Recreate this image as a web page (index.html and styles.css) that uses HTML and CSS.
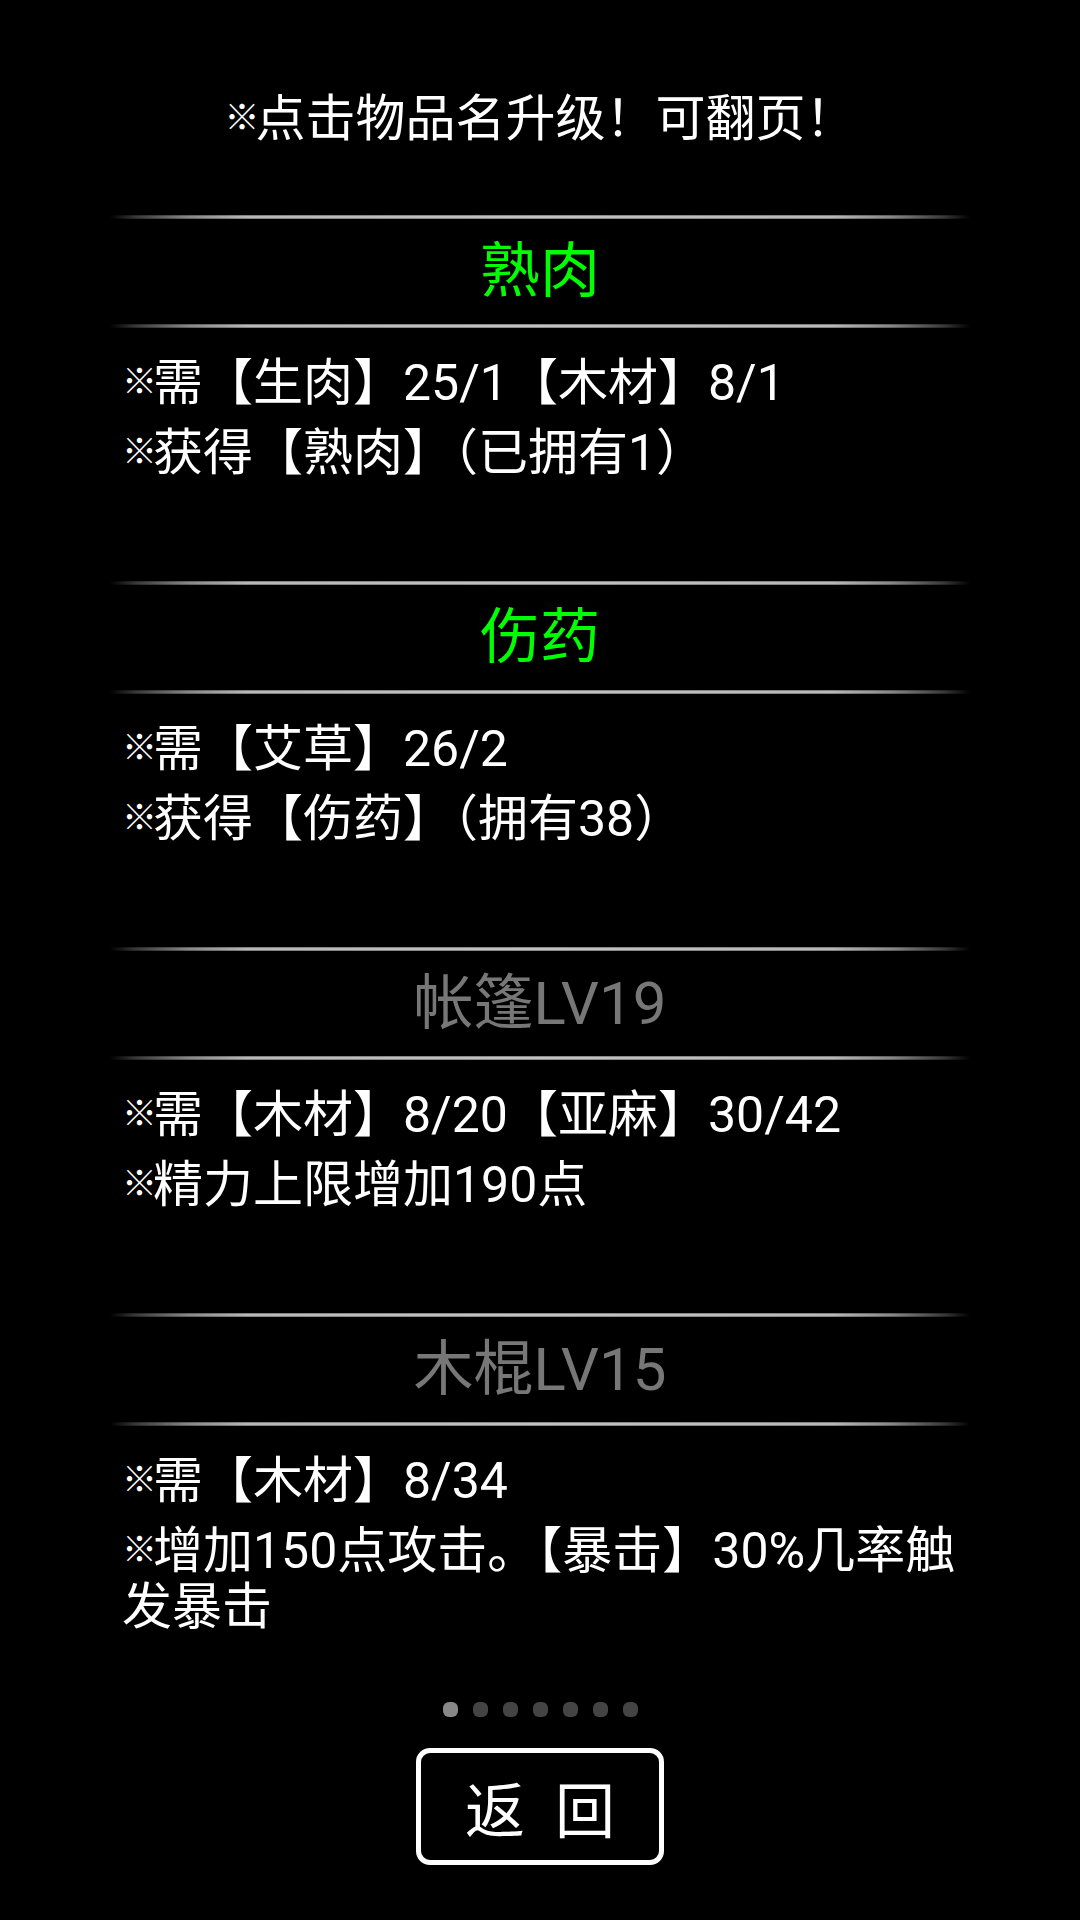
FILE: index.html
```html
<!DOCTYPE html>
<html lang="zh-CN">

<head>
    <meta charset="UTF-8">
    <meta name="viewport" content="width=device-width, initial-scale=1.0">
    <title>制作</title>
    <link rel="stylesheet" href="styles.css">
</head>

<body>
    <div class="screen">
        <p class="hint"><span class="mark">※</span>点击物品名升级！可翻页！</p>

        <div class="item-list">
            <div class="item">
                <div class="divider"></div>
                <div class="item-name ready">熟肉</div>
                <div class="divider"></div>
                <div class="item-desc">
                    <p><span class="mark">※</span>需【生肉】25/1【木材】8/1</p>
                    <p><span class="mark">※</span>获得【熟肉】（已拥有1）</p>
                </div>
            </div>

            <div class="item">
                <div class="divider"></div>
                <div class="item-name ready">伤药</div>
                <div class="divider"></div>
                <div class="item-desc">
                    <p><span class="mark">※</span>需【艾草】26/2</p>
                    <p><span class="mark">※</span>获得【伤药】（拥有38）</p>
                </div>
            </div>

            <div class="item">
                <div class="divider"></div>
                <div class="item-name">帐篷LV19</div>
                <div class="divider"></div>
                <div class="item-desc">
                    <p><span class="mark">※</span>需【木材】8/20【亚麻】30/42</p>
                    <p><span class="mark">※</span>精力上限增加190点</p>
                </div>
            </div>

            <div class="item">
                <div class="divider"></div>
                <div class="item-name">木棍LV15</div>
                <div class="divider"></div>
                <div class="item-desc">
                    <p><span class="mark">※</span>需【木材】8/34</p>
                    <p><span class="mark">※</span>增加150点攻击。【暴击】30%几率触发暴击</p>
                </div>
            </div>
        </div>

        <div class="pager">
            <span class="dot active"></span>
            <span class="dot"></span>
            <span class="dot"></span>
            <span class="dot"></span>
            <span class="dot"></span>
            <span class="dot"></span>
            <span class="dot"></span>
        </div>

        <button class="back-button"><span>返</span><span>回</span></button>
    </div>
</body>

</html>
```

FILE: styles.css
```css
body {
    margin: 0;
    background-color: #000;
    color: #fff;
    font-family: Roboto, "Noto Sans CJK SC", sans-serif;
}

.screen {
    width: 1080px;
    height: 1920px;
    display: flex;
    flex-direction: column;
    align-items: center;
}

.hint {
    margin: 0;
    padding-top: 89px;
    font-size: 50px;
    line-height: 60px;
    text-align: center;
}

/* the reference mark is drawn small and narrow */
.mark {
    font-size: 35px;
    font-weight: bold;
    letter-spacing: -4px;
    vertical-align: 6px;
}

.item-list {
    width: 860px;
    margin-top: 66px;
}

.item {
    height: 366px;
}

.divider {
    height: 4px;
    background:
        linear-gradient(to bottom, rgba(0, 0, 0, 0.45), rgba(0, 0, 0, 0) 40%, rgba(0, 0, 0, 0) 60%, rgba(0, 0, 0, 0.45)),
        linear-gradient(to right, rgba(200, 200, 200, 0) 0, #3a3a3a 3%, #8a8a8a 9%, #bdbdbd 16%, #c8c8c8 50%, #bdbdbd 84%, #8a8a8a 91%, #3a3a3a 97%, rgba(200, 200, 200, 0) 100%);
}

.item-name {
    height: 105px;
    line-height: 105px;
    font-size: 60px;
    text-align: center;
    color: #777;
}

.item-name.ready {
    color: #00ff00;
}

.item-desc {
    padding: 27px 0 0 12px;
    width: 842px;
}

.item-desc p {
    margin: 0 0 14px;
    font-size: 50px;
    line-height: 56px;
}

.pager {
    display: flex;
    gap: 15px;
    margin-top: 23px;
}

.dot {
    width: 15px;
    height: 15px;
    border-radius: 6px;
    background-color: #444;
}

.dot.active {
    background-color: #888;
}

.back-button {
    margin-top: 31px;
    width: 248px;
    height: 117px;
    border: 5px solid #fff;
    border-radius: 14px;
    background-color: #000;
    color: #fff;
    font-family: inherit;
    font-size: 60px;
    display: flex;
    justify-content: center;
    align-items: center;
    gap: 30px;
    padding: 0;
}
```
